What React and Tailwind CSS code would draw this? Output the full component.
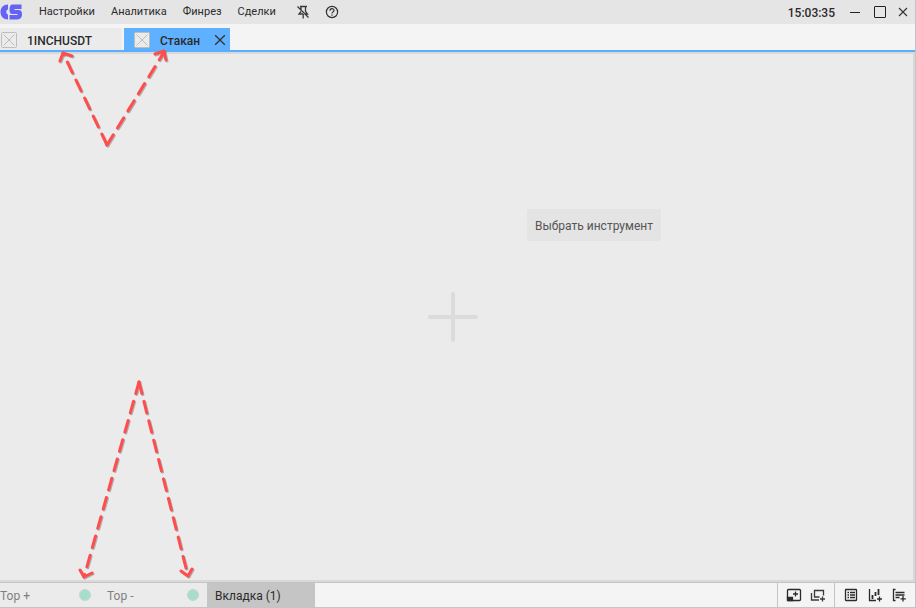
import { useState } from 'react';

const menu = ['Настройки', 'Аналитика', 'Финрез', 'Сделки'];

const Logo = () => (
  <svg width="22" height="16" viewBox="0 0 22 16" fill="#6563f5" aria-hidden="true">
    <path d="M8 .5V5.500C7 5.800 6.300 6.700 6.300 8S7 10.200 8 10.500V15.500C3.500 15.500.5 12.500.5 8S3.500.5 8 .5Z" />
    <path d="M12.500 .5H21.500v4.500h-7v1h4.500c2 0 3 1.600 3 4.300 0 3-1.500 5.200-4.500 5.200H9.500v-4.500h8v-1H12C10.300 10 9.500 8.500 9.500 5.500S10.300.5 12.500 .5Z" />
  </svg>
);

const PinOff = () => (
  <svg width="14" height="14" viewBox="0 0 14 14" fill="none" stroke="#3a3a3a" strokeWidth="1.300" aria-hidden="true">
    <path d="M4 1.500h7M5 1.500v3M9.500 1.500v5l2 2.500H9M5 6.500 3 9h4M7.200 9v4.500M1.500 1.500l11 11" />
  </svg>
);

const Help = () => (
  <svg width="14" height="14" viewBox="0 0 14 14" fill="none" stroke="#2f2f2f" strokeWidth="1.200" aria-hidden="true">
    <circle cx="7" cy="7" r="5.600" />
    <path d="M5 5.800C5 3 9 3 9 5.500 9 6.800 7 7 7 8.500M7 9.500V10.800" />
  </svg>
);

const Close = ({ size }) => (
  <svg width={size} height={size} viewBox="0 0 10 10" stroke="#333" strokeWidth="1.100" aria-hidden="true">
    <path d="M1 1l8 8M9 1 1 9" />
  </svg>
);

const Placeholder = () => (
  <svg width="16" height="16" viewBox="0 0 16 16" fill="#ebebeb" stroke="#bdbdbd" aria-hidden="true">
    <rect x="0.500" y="0.500" width="15" height="15" rx="1" />
    <path d="M2.500 2.500l11 11M13.500 2.500l-11 11" />
  </svg>
);

const WindowPlus = () => (
  <svg width="16" height="14" viewBox="0 0 16 14" fill="none" stroke="#2b2b2b" strokeWidth="1.300" aria-hidden="true">
    <rect x="1.500" y="1.500" width="13" height="11" rx="1" />
    <path d="M1.500 9.500h5v3h-5z" fill="#2b2b2b" />
    <path d="M9.500 3.500v5M7 6h5" />
  </svg>
);

const CopyPlus = () => (
  <svg width="16" height="14" viewBox="0 0 16 14" fill="none" stroke="#3a3a3a" strokeWidth="1.300" aria-hidden="true">
    <path d="M13.500 7.500v-5h-9v6.500H9.500M1.500 5v7H9M12.500 8.500v5M10 11h5" />
  </svg>
);

const ListBox = () => (
  <svg width="14" height="14" viewBox="0 0 14 14" fill="none" stroke="#2b2b2b" strokeWidth="1.300" aria-hidden="true">
    <rect x="1.500" y="1.500" width="11" height="11" rx="0.500" />
    <path d="M3.500 4.500H5M6 4.500h5M3.500 7H5M6 7h5M3.500 9.500H5M6 9.500h5" />
  </svg>
);

const ChartPlus = () => (
  <svg width="14" height="14" viewBox="0 0 14 14" fill="none" stroke="#2b2b2b" strokeWidth="1.300" aria-hidden="true">
    <path d="M1.500 1v11.500H8M11.500 8.500v5M9 11h5" />
    <path d="M4.500 7v4M7.500 4v4M10.500 1v6" strokeWidth="1.800" />
  </svg>
);

const NotesPlus = () => (
  <svg width="14" height="14" viewBox="0 0 14 14" fill="none" stroke="#2b2b2b" strokeWidth="1.300" aria-hidden="true">
    <path d="M3.500 1.500h-2v11h2M3.500 4.500h9M3.500 7h9M3.500 9.500h4M11 8v5.500M8.500 10.800h5.300" />
  </svg>
);

const Arrows = () => (
  <svg
    className="pointer-events-none absolute top-0 left-0 drop-shadow-[1px_1px_0px_rgba(0,0,0,0.25)]"
    width="230"
    height="600"
    fill="none"
    stroke="#ff4d4d"
    strokeWidth="3"
    strokeLinecap="round"
    strokeLinejoin="round"
    aria-hidden="true"
  >
    <g strokeDasharray="12 8">
      <path d="M107 145 63 53" />
      <path d="M107 145 164 52" />
      <path d="M139 382 84 577" />
      <path d="M139 382 188 576" />
    </g>
    <path d="M60 61l3-8 9 3M155 54l9-3 2 9M80 570l4 7 8-4M181 571l7 5 4-7" />
  </svg>
);

const App = () => {
  const [tab, setTab] = useState('stakan');

  return (
    <div className="relative flex min-h-screen flex-col border-r border-[#c4c4c4] bg-[#f4f4f4] font-['Roboto',sans-serif] text-[#2b2b2b]">
      <header className="flex h-6 items-center justify-between bg-[#e5e5e5] pr-[7px]">
        <div className="flex items-center">
          <Logo />
          <nav className="ml-[17px] flex gap-4 text-[11px] leading-4">
            {menu.map((item) => (
              <button key={item} type="button">{item}</button>
            ))}
          </nav>
          <button type="button" aria-label="Открепить" className="ml-5"><PinOff /></button>
          <button type="button" aria-label="Помощь" className="ml-[15px]"><Help /></button>
        </div>
        <div className="flex items-center">
          <time className="mr-[15px] pt-0.5 text-xs leading-4 font-medium">15:03:35</time>
          <button type="button" aria-label="Свернуть" className="flex w-3 items-center">
            <span className="h-px w-2.5 bg-[#222]"></span>
          </button>
          <button type="button" aria-label="Развернуть" className="mx-3 size-3 rounded-[1px] border border-[#222]"></button>
          <button type="button" aria-label="Закрыть"><Close size={10} /></button>
        </div>
      </header>

      <div className="flex gap-0.5 border-b-2 border-[#5aaeff] pt-1 text-xs leading-4 font-medium">
        <button
          type="button"
          onClick={() => setTab('inch')}
          aria-pressed={tab === 'inch'}
          className="flex h-[22px] w-[122px] items-center gap-2.5 bg-[#ebebeb] pt-0.5 pl-px"
        >
          <Placeholder />
          <span className="pt-0.5">1INCHUSDT</span>
        </button>
        <div className="flex h-[22px] w-[106px] items-center justify-between bg-[#5fb0ff] pt-0.5 pr-1 pl-2.5">
          <button
            type="button"
            onClick={() => setTab('stakan')}
            aria-pressed={tab === 'stakan'}
            className="flex items-center gap-2.5"
          >
            <Placeholder />
            <span className="pt-0.5">Стакан</span>
          </button>
          <button type="button" aria-label="Закрыть вкладку"><Close size={12} /></button>
        </div>
      </div>

      <main className="relative flex flex-1 items-center justify-center border-y-2 border-r-2 border-[#d9d9d9] bg-[#ebebeb]">
        <button type="button" aria-label="Добавить" className="mr-2">
          <svg width="50" height="50" viewBox="0 0 50 50" stroke="#dbdbdb" strokeWidth="4" strokeLinecap="round">
            <path d="M25 2v46M2 25h46" />
          </svg>
        </button>
        <button
          type="button"
          className="absolute top-[155px] left-[527px] h-8 rounded-xs bg-[#e4e4e4] px-2 pt-0.5 text-xs text-[#555]"
        >
          Выбрать инструмент
        </button>
      </main>

      <footer className="flex h-[26px] border-y border-[#c4c4c4] text-xs leading-4 text-[#808080]">
        <button type="button" className="flex w-[99px] items-center justify-between bg-[#ebebeb] pr-2">
          <span className="pt-0.5">Top +</span>
          <span className="size-3 rounded-full border border-[#c5d6d0] bg-[#a5dfcb]"></span>
        </button>
        <button type="button" className="flex w-[108px] items-center justify-between bg-[#ebebeb] px-2">
          <span className="pt-0.5">Top -</span>
          <span className="size-3 rounded-full border border-[#c5d6d0] bg-[#a5dfcb]"></span>
        </button>
        <button type="button" className="w-[108px] bg-[#c5c5c5] px-2 pt-0.5 text-left text-[#2b2b2b]">
          Вкладка (1)
        </button>
        <div className="ml-auto flex">
          <div className="flex items-center gap-2 border-l border-[#c4c4c4] px-2">
            <button type="button" aria-label="Новое окно"><WindowPlus /></button>
            <button type="button" aria-label="Дублировать окно"><CopyPlus /></button>
          </div>
          <div className="flex items-center gap-2.5 border-l border-[#c4c4c4] px-[9px]">
            <button type="button" aria-label="Стакан"><ListBox /></button>
            <button type="button" aria-label="Добавить график"><ChartPlus /></button>
            <button type="button" aria-label="Добавить список"><NotesPlus /></button>
          </div>
        </div>
      </footer>

      <Arrows />
    </div>
  );
};

export default App;
